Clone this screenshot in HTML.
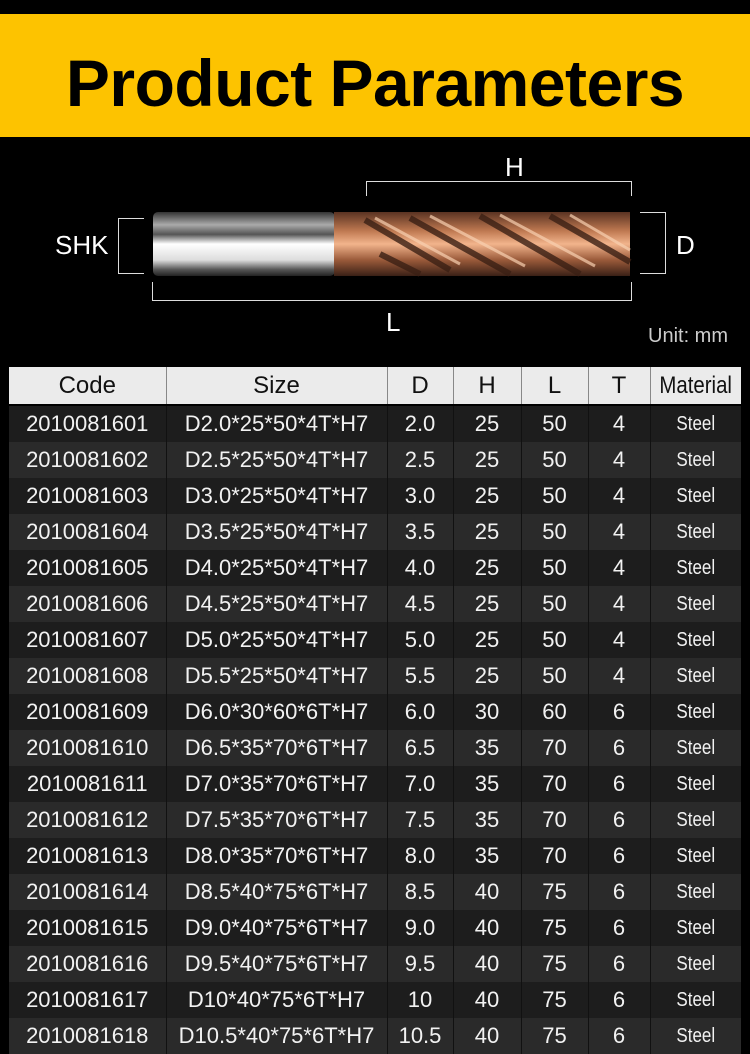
<!DOCTYPE html>
<html><head><meta charset="utf-8"><style>
body{margin:0;width:750px;height:1054px;background:#000;overflow:hidden;font-family:"Liberation Sans",sans-serif;position:relative}
.ban{position:absolute;left:0;top:14px;width:750px;height:123px;background:#fdc300;text-align:center;font-weight:bold;font-size:66px;line-height:138px;color:#000;letter-spacing:-0.5px}
.lab{position:absolute;color:#fff;font-size:26px}
.ln{position:absolute;border-color:#ddd;border-style:solid;border-width:0}
table{position:absolute;left:9px;top:367px;width:732px;border-collapse:collapse;table-layout:fixed}
th{background:#ebebeb;color:#111;font-weight:normal;font-size:24px;height:37px;border-left:1px solid #888;padding:0;border-bottom:2px solid #000}
td{color:#f2f2f2;font-size:22px;height:36px;padding:0;text-align:center;border-left:1px solid #111;white-space:nowrap}
tr:nth-child(odd) td{background:#2a2a2a}
tr:nth-child(even) td{background:#1d1d1d}
th:first-child,td:first-child{border-left:none}
.sx{display:inline-block;transform:scaleX(.85)}
td.m{font-size:20px}
</style></head><body>
<div class="ban">Product Parameters</div>
<div class="lab" style="left:505px;top:152px">H</div>
<div class="ln" style="left:366px;top:181px;width:264px;height:14px;border-top-width:1px;border-left-width:1px;border-right-width:1px"></div>
<div class="lab" style="left:55px;top:230px">SHK</div>
<div class="ln" style="left:118px;top:218px;width:25px;height:54px;border-width:1px 0 1px 1px"></div>
<div class="lab" style="left:676px;top:230px">D</div>
<div class="ln" style="left:640px;top:212px;width:25px;height:60px;border-width:1px 1px 1px 0"></div>
<div class="ln" style="left:152px;top:282px;width:478px;height:18px;border-width:0 1px 1px 1px"></div>
<div class="lab" style="left:386px;top:307px">L</div>
<div style="position:absolute;right:22px;top:325px;color:#ccc;font-size:20px">Unit: mm</div>
<svg style="position:absolute;left:150px;top:210px" width="485" height="68">
<defs>
<linearGradient id="s" x1="0" y1="0" x2="0" y2="1"><stop offset="0" stop-color="#333"/><stop offset=".2" stop-color="#aaa"/><stop offset=".35" stop-color="#555"/><stop offset=".5" stop-color="#fff"/><stop offset=".75" stop-color="#ddd"/><stop offset=".9" stop-color="#555"/><stop offset="1" stop-color="#222"/></linearGradient>
<linearGradient id="c" x1="0" y1="0" x2="0" y2="1"><stop offset="0" stop-color="#5a3322"/><stop offset=".3" stop-color="#c07a52"/><stop offset=".5" stop-color="#f2b48c"/><stop offset=".75" stop-color="#9a5a3a"/><stop offset="1" stop-color="#3a2016"/></linearGradient>
</defs>
<rect x="3" y="2" width="182" height="64" rx="5" fill="url(#s)"/>
<rect x="184" y="2" width="296" height="64" fill="url(#c)"/>
<g stroke="#3a1f14" stroke-width="6" fill="none" opacity=".8">
<path d="M215 10 L300 60 M260 8 L360 64 M330 6 L430 64 M400 6 L480 52 M230 44 L270 64"/>
</g>
<g stroke="#f8d0b0" stroke-width="3" fill="none" opacity=".7">
<path d="M225 8 L310 54 M280 6 L375 56 M350 5 L445 56 M420 5 L480 40"/>
</g>
</svg>
<table>
<colgroup><col style="width:157px"><col style="width:221px"><col style="width:66px"><col style="width:68px"><col style="width:67px"><col style="width:62px"><col style="width:91px"></colgroup>
<tr><th>Code</th><th>Size</th><th>D</th><th>H</th><th>L</th><th>T</th><th><span class="sx">Material</span></th></tr>
<tr><td>2010081601</td><td>D2.0*25*50*4T*H7</td><td>2.0</td><td>25</td><td>50</td><td>4</td><td class="m"><span class="sx">Steel</span></td></tr>
<tr><td>2010081602</td><td>D2.5*25*50*4T*H7</td><td>2.5</td><td>25</td><td>50</td><td>4</td><td class="m"><span class="sx">Steel</span></td></tr>
<tr><td>2010081603</td><td>D3.0*25*50*4T*H7</td><td>3.0</td><td>25</td><td>50</td><td>4</td><td class="m"><span class="sx">Steel</span></td></tr>
<tr><td>2010081604</td><td>D3.5*25*50*4T*H7</td><td>3.5</td><td>25</td><td>50</td><td>4</td><td class="m"><span class="sx">Steel</span></td></tr>
<tr><td>2010081605</td><td>D4.0*25*50*4T*H7</td><td>4.0</td><td>25</td><td>50</td><td>4</td><td class="m"><span class="sx">Steel</span></td></tr>
<tr><td>2010081606</td><td>D4.5*25*50*4T*H7</td><td>4.5</td><td>25</td><td>50</td><td>4</td><td class="m"><span class="sx">Steel</span></td></tr>
<tr><td>2010081607</td><td>D5.0*25*50*4T*H7</td><td>5.0</td><td>25</td><td>50</td><td>4</td><td class="m"><span class="sx">Steel</span></td></tr>
<tr><td>2010081608</td><td>D5.5*25*50*4T*H7</td><td>5.5</td><td>25</td><td>50</td><td>4</td><td class="m"><span class="sx">Steel</span></td></tr>
<tr><td>2010081609</td><td>D6.0*30*60*6T*H7</td><td>6.0</td><td>30</td><td>60</td><td>6</td><td class="m"><span class="sx">Steel</span></td></tr>
<tr><td>2010081610</td><td>D6.5*35*70*6T*H7</td><td>6.5</td><td>35</td><td>70</td><td>6</td><td class="m"><span class="sx">Steel</span></td></tr>
<tr><td>2010081611</td><td>D7.0*35*70*6T*H7</td><td>7.0</td><td>35</td><td>70</td><td>6</td><td class="m"><span class="sx">Steel</span></td></tr>
<tr><td>2010081612</td><td>D7.5*35*70*6T*H7</td><td>7.5</td><td>35</td><td>70</td><td>6</td><td class="m"><span class="sx">Steel</span></td></tr>
<tr><td>2010081613</td><td>D8.0*35*70*6T*H7</td><td>8.0</td><td>35</td><td>70</td><td>6</td><td class="m"><span class="sx">Steel</span></td></tr>
<tr><td>2010081614</td><td>D8.5*40*75*6T*H7</td><td>8.5</td><td>40</td><td>75</td><td>6</td><td class="m"><span class="sx">Steel</span></td></tr>
<tr><td>2010081615</td><td>D9.0*40*75*6T*H7</td><td>9.0</td><td>40</td><td>75</td><td>6</td><td class="m"><span class="sx">Steel</span></td></tr>
<tr><td>2010081616</td><td>D9.5*40*75*6T*H7</td><td>9.5</td><td>40</td><td>75</td><td>6</td><td class="m"><span class="sx">Steel</span></td></tr>
<tr><td>2010081617</td><td>D10*40*75*6T*H7</td><td>10</td><td>40</td><td>75</td><td>6</td><td class="m"><span class="sx">Steel</span></td></tr>
<tr><td>2010081618</td><td>D10.5*40*75*6T*H7</td><td>10.5</td><td>40</td><td>75</td><td>6</td><td class="m"><span class="sx">Steel</span></td></tr>
</table>
</body></html>
